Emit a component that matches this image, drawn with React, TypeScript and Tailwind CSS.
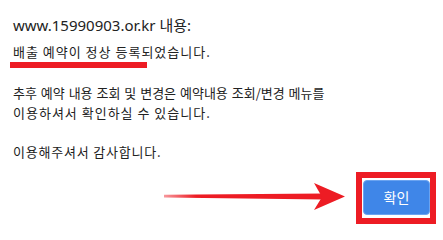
const latin = {
  fontFamily: '"Noto Sans", "Noto Sans CJK KR", sans-serif',
};
const korean = {
  fontFamily: '"Noto Sans CJK KR", "Noto Sans", sans-serif',
};

function Arrow() {
  return (
    <svg
      className="absolute left-[164px] top-[180px]"
      width="182"
      height="32"
      viewBox="0 0 182 32"
    >
      <defs>
        <linearGradient id="shaft" x1="0" x2="1" y1="0" y2="0">
          <stop offset="0" stopColor="#ed1c24" stopOpacity="0.45" />
          <stop offset="0.2" stopColor="#ed1c24" stopOpacity="1" />
          <stop offset="1" stopColor="#ed1c24" stopOpacity="1" />
        </linearGradient>
      </defs>
      <polygon points="0,14.8 160,13.6 160,19.6 0,17.6" fill="url(#shaft)" />
      <polygon points="150,3 181,16.5 150,30 158,17" fill="#ed1c24" />
    </svg>
  );
}

export default function App() {
  return (
    <div
      className="relative w-[443px] h-[226px] overflow-hidden bg-white text-[#222]"
      style={latin}
    >
      <div className="flex flex-col pl-[13px] pt-[15px]">
        <div className="h-[20px] leading-[20px] text-[15px]">
          www.15990903.or.kr 내용:
        </div>
        <div
          className="mt-[7px] h-[20px] leading-[20px] text-[13px] tracking-[1px]"
          style={korean}
        >
          <span className="relative">
            배출 예약이 정상 등록되었습니다.
            <span className="absolute left-[-3px] top-[20px] h-[6px] w-[137px] bg-[#ed1c24]" />
          </span>
        </div>
        <div
          className="mt-[21px] flex flex-col text-[13px] leading-[20px]"
          style={korean}
        >
          <span className="[word-spacing:1px]">
            추후 예약 내용 조회 및 변경은 예약내용 조회/변경 메뉴를
          </span>
          <span className="tracking-[1px]">이용하셔서 확인하실 수 있습니다.</span>
          <span className="mt-[19px] tracking-[0.8px]">이용해주셔서 감사합니다.</span>
        </div>
      </div>

      <div className="mt-[10px] flex justify-end pr-[7px]">
        <div className="border-[6px] border-[#ed1c24] bg-white pt-[2px] pb-[3px] pl-px">
          <button className="flex h-[35px] w-[67px] items-center justify-center rounded-[4px] border border-[#6aa3f0] bg-[#3f86e8] text-[14px] text-white">
            확인
          </button>
        </div>
      </div>

      <Arrow />
    </div>
  );
}
